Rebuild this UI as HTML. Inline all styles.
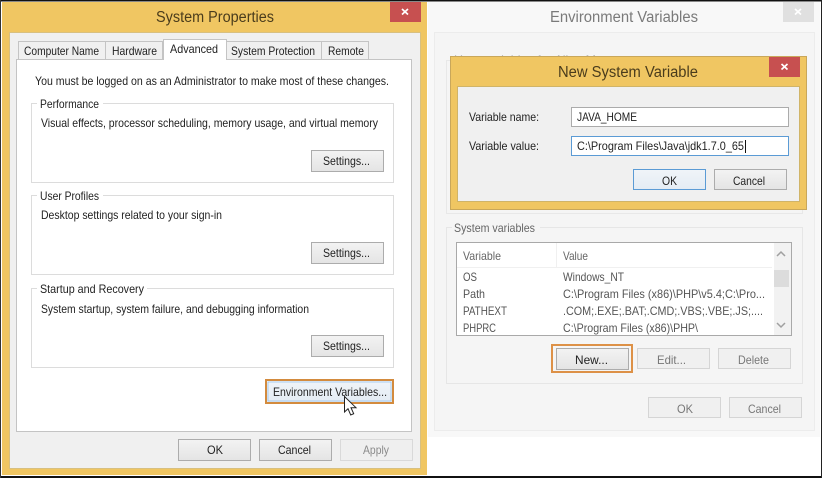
<!DOCTYPE html>
<html><head><meta charset="utf-8"><style>
html,body{margin:0;padding:0;background:#fff;overflow:hidden}
svg{display:block}
text{font-family:"Liberation Sans",sans-serif;font-size:12px;fill:#222}
.t{font-size:15.5px;fill:#4a3c1c}
.g{fill:#8a8a8a}
.m{text-anchor:middle}
</style></head><body>
<svg width="822" height="478" viewBox="0 0 822 478" xmlns="http://www.w3.org/2000/svg">
<defs>
<linearGradient id="b" x1="0" y1="0" x2="0" y2="1"><stop offset="0" stop-color="#f3f3f3"/><stop offset="1" stop-color="#e4e4e4"/></linearGradient>
<linearGradient id="h" x1="0" y1="0" x2="0" y2="1"><stop offset="0" stop-color="#f0f4f8"/><stop offset="1" stop-color="#e4ecf4"/></linearGradient>
</defs>
<rect width="822" height="478" fill="#fff"/>

<!-- Left window -->
<rect x="2" y="2" width="425" height="473" fill="#f0c662"/>
<rect x="9.500" y="32.500" width="411" height="436" fill="#f0f0f0" stroke="#d8c080"/>
<rect x="390" y="2" width="31" height="20" fill="#c75050"/>
<path d="M402 9l6 5.500M408 9l-6 5.500" stroke="#fff" stroke-width="1.700"/>
<text class="t" x="156" y="22" textLength="118" lengthAdjust="spacingAndGlyphs">System Properties</text>

<!-- Tabs -->
<rect x="16.500" y="59.500" width="395" height="372" fill="#fff" stroke="#c4c4c4"/>
<g fill="#f0f0f0" stroke="#c4c4c4">
<rect x="18.500" y="41.500" width="87" height="18"/>
<rect x="105.500" y="41.500" width="57" height="18"/>
<rect x="226.500" y="41.500" width="95" height="18"/>
<rect x="321.500" y="41.500" width="47" height="18"/>
</g>
<path d="M163.500 60V39.500H226.500V60" fill="#fff" stroke="#c4c4c4"/>
<rect x="164" y="58" width="62" height="3" fill="#fff"/>
<text x="24" y="55" textLength="75" lengthAdjust="spacingAndGlyphs">Computer Name</text>
<text x="112" y="55" textLength="45" lengthAdjust="spacingAndGlyphs">Hardware</text>
<text x="170" y="53" textLength="48" lengthAdjust="spacingAndGlyphs">Advanced</text>
<text x="231" y="55" textLength="84" lengthAdjust="spacingAndGlyphs">System Protection</text>
<text x="328" y="55" textLength="36" lengthAdjust="spacingAndGlyphs">Remote</text>
<text x="35" y="85" textLength="354" lengthAdjust="spacingAndGlyphs">You must be logged on as an Administrator to make most of these changes.</text>

<!-- Groups -->
<g fill="none" stroke="#dcdcdc">
<rect x="31.500" y="103.500" width="362" height="79"/>
<rect x="31.500" y="195.500" width="362" height="79"/>
<rect x="31.500" y="288.500" width="362" height="79"/>
</g>
<rect x="37" y="100" width="66" height="8" fill="#fff"/>
<rect x="37" y="192" width="66" height="8" fill="#fff"/>
<rect x="37" y="285" width="110" height="8" fill="#fff"/>
<text x="40" y="108" textLength="59" lengthAdjust="spacingAndGlyphs">Performance</text>
<text x="41" y="127" textLength="337" lengthAdjust="spacingAndGlyphs">Visual effects, processor scheduling, memory usage, and virtual memory</text>
<text x="40" y="200" textLength="59" lengthAdjust="spacingAndGlyphs">User Profiles</text>
<text x="41" y="219" textLength="181" lengthAdjust="spacingAndGlyphs">Desktop settings related to your sign-in</text>
<text x="40" y="293" textLength="104" lengthAdjust="spacingAndGlyphs">Startup and Recovery</text>
<text x="41" y="313" textLength="268" lengthAdjust="spacingAndGlyphs">System startup, system failure, and debugging information</text>

<g fill="url(#b)" stroke="#acacac">
<rect x="311.500" y="150.500" width="72" height="21"/>
<rect x="311.500" y="242.500" width="72" height="21"/>
<rect x="311.500" y="335.500" width="72" height="21"/>
<rect x="178.500" y="439.500" width="72" height="21"/>
<rect x="259.500" y="439.500" width="72" height="21"/>
</g>
<rect x="340.500" y="439.500" width="72" height="21" fill="#efefef" stroke="#d9d9d9"/>
<text x="323" y="165" textLength="47" lengthAdjust="spacingAndGlyphs">Settings...</text>
<text x="323" y="257" textLength="47" lengthAdjust="spacingAndGlyphs">Settings...</text>
<text x="323" y="350" textLength="47" lengthAdjust="spacingAndGlyphs">Settings...</text>
<text x="207" y="454" textLength="16" lengthAdjust="spacingAndGlyphs">OK</text>
<text x="278" y="454" textLength="33" lengthAdjust="spacingAndGlyphs">Cancel</text>
<text x="363" y="454" class="g" textLength="26" lengthAdjust="spacingAndGlyphs">Apply</text>

<!-- Env button -->
<rect x="266" y="380" width="127" height="23" fill="url(#h)" stroke="#d38b3e" stroke-width="2"/>
<rect x="268" y="382" width="123" height="19" fill="url(#h)" stroke="#7eb4ea" stroke-width=".6"/>
<text x="273" y="396" textLength="114" lengthAdjust="spacingAndGlyphs">Environment Variables...</text>
<path d="M344.500 396.500V412l3.500-3.300 2.700 6.300 3-1.300-2.700-6h5z" fill="#fff" stroke="#222" stroke-width="1"/>

<!-- Right window -->
<rect x="428" y="2" width="392" height="435" fill="#f8f8f8"/>
<rect x="434.500" y="32.500" width="380" height="398" fill="#f5f5f5" stroke="#ececec"/>
<rect x="783" y="2" width="31" height="20" fill="#e0e0e0"/>
<path d="M795 9l6 5.500M801 9l-6 5.500" stroke="#fff" stroke-width="1.700"/>
<text x="550" y="22" class="t" style="fill:#7a7a7a" textLength="148" lengthAdjust="spacingAndGlyphs">Environment Variables</text>
<rect x="446.500" y="60.500" width="356" height="153" fill="none" stroke="#e8e8e8"/>
<text x="454" y="64" class="g" textLength="142" lengthAdjust="spacingAndGlyphs">User variables for Allen M</text>

<!-- System variables -->
<rect x="446.500" y="227.500" width="356" height="156" fill="none" stroke="#e6e6e6"/>
<rect x="452" y="224" width="88" height="8" fill="#f5f5f5"/>
<text style="fill:#666" x="454" y="232" textLength="81" lengthAdjust="spacingAndGlyphs">System variables</text>
<rect x="456.500" y="242.500" width="335" height="93" fill="#fff" stroke="#a9a9a9"/>
<rect x="774" y="243" width="17" height="92" fill="#f2f2f2"/>
<rect x="774" y="270" width="15" height="17" fill="#dcdcdc"/>
<path d="M777 256l4-4 4 4M777 323l4 4 4-4" fill="none" stroke="#a0a0a0" stroke-width="1.500"/>
<path d="M457 267.500H772M556.500 243V267" stroke="#f0f0f0"/>
<text style="fill:#666" x="463" y="260" textLength="38" lengthAdjust="spacingAndGlyphs">Variable</text>
<text style="fill:#666" x="563" y="260" textLength="25" lengthAdjust="spacingAndGlyphs">Value</text>
<text style="fill:#555" x="463" y="281" textLength="14" lengthAdjust="spacingAndGlyphs">OS</text>
<text style="fill:#555" x="563" y="281" textLength="61" lengthAdjust="spacingAndGlyphs">Windows_NT</text>
<text style="fill:#555" x="463" y="298" textLength="22" lengthAdjust="spacingAndGlyphs">Path</text>
<text style="fill:#555" x="563" y="298" textLength="202" lengthAdjust="spacingAndGlyphs">C:\Program Files (x86)\PHP\v5.4;C:\Pro...</text>
<text style="fill:#555" x="463" y="315" textLength="44" lengthAdjust="spacingAndGlyphs">PATHEXT</text>
<text style="fill:#555" x="563" y="315" textLength="200" lengthAdjust="spacingAndGlyphs">.COM;.EXE;.BAT;.CMD;.VBS;.VBE;.JS;....</text>
<text style="fill:#555" x="463" y="332" textLength="33" lengthAdjust="spacingAndGlyphs">PHPRC</text>
<text style="fill:#555" x="563" y="332" textLength="135" lengthAdjust="spacingAndGlyphs">C:\Program Files (x86)\PHP\</text>
<rect x="552" y="345" width="80" height="27" fill="none" stroke="#dd9147" stroke-width="2"/>
<rect x="556.500" y="348.500" width="72" height="21" fill="url(#b)" stroke="#acacac"/>
<text x="575" y="364" textLength="33" lengthAdjust="spacingAndGlyphs">New...</text>
<g fill="#f0f0f0" stroke="#d5d5d5">
<rect x="637.500" y="348.500" width="72" height="20"/>
<rect x="718.500" y="348.500" width="72" height="20"/>
<rect x="648.500" y="397.500" width="72" height="20"/>
<rect x="729.500" y="397.500" width="72" height="20"/>
</g>
<text x="657" y="364" style="fill:#777" textLength="29" lengthAdjust="spacingAndGlyphs">Edit...</text>
<text x="738" y="364" style="fill:#777" textLength="31" lengthAdjust="spacingAndGlyphs">Delete</text>
<text x="677" y="413" style="fill:#777" textLength="16" lengthAdjust="spacingAndGlyphs">OK</text>
<text x="748" y="413" style="fill:#777" textLength="33" lengthAdjust="spacingAndGlyphs">Cancel</text>

<!-- New System Variable dialog -->
<rect x="450.500" y="56.500" width="356" height="153" fill="#f0c662" stroke="#c9a75a"/>
<rect x="457.500" y="86.500" width="342" height="115" fill="#f0f0f0" stroke="#d0b468"/>
<rect x="769" y="57" width="31" height="20" fill="#c75050"/>
<path d="M781.500 64l6 5.500M787.500 64l-6 5.500" stroke="#fff" stroke-width="1.700"/>
<text class="t" x="558" y="77" textLength="140" lengthAdjust="spacingAndGlyphs">New System Variable</text>
<text x="469" y="121" textLength="70" lengthAdjust="spacingAndGlyphs">Variable name:</text>
<text x="469" y="150" textLength="70" lengthAdjust="spacingAndGlyphs">Variable value:</text>
<rect x="571.500" y="107.500" width="217" height="19" fill="#fff" stroke="#ababab"/>
<rect x="571.500" y="136.500" width="217" height="19" fill="#fff" stroke="#5b9bd5"/>
<text x="577" y="121" textLength="60" lengthAdjust="spacingAndGlyphs">JAVA_HOME</text>
<text x="577" y="150" textLength="167" lengthAdjust="spacingAndGlyphs">C:\Program Files\Java\jdk1.7.0_65</text>
<path d="M745.500 140V153" stroke="#111"/>
<rect x="633.500" y="169.500" width="72" height="20" fill="url(#h)" stroke="#5b9bd5"/>
<rect x="714.500" y="169.500" width="72" height="20" fill="url(#b)" stroke="#acacac"/>
<text x="662" y="185" textLength="15" lengthAdjust="spacingAndGlyphs">OK</text>
<text x="733" y="185" textLength="32" lengthAdjust="spacingAndGlyphs">Cancel</text>

<!-- Outer border -->
<rect x="0" y="0" width="822" height="1.500" fill="#111"/>
<rect x="0" y="476" width="822" height="2" fill="#111"/>
<rect x="0" y="0" width="1" height="478" fill="#333"/>
<rect x="821" y="0" width="1" height="478" fill="#222"/>
</svg>
</body></html>
